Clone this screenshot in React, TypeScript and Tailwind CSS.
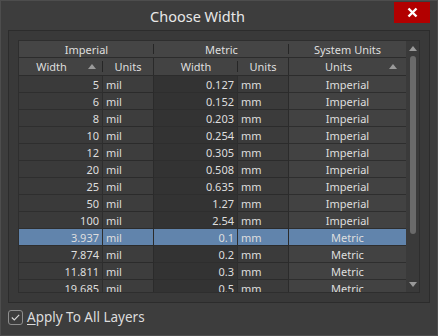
import React from "react";

const rows = [
  ["5", "0.127", "Imperial"],
  ["6", "0.152", "Imperial"],
  ["8", "0.203", "Imperial"],
  ["10", "0.254", "Imperial"],
  ["12", "0.305", "Imperial"],
  ["20", "0.508", "Imperial"],
  ["25", "0.635", "Imperial"],
  ["50", "1.27", "Imperial"],
  ["100", "2.54", "Imperial"],
  ["3.937", "0.1", "Metric"],
  ["7.874", "0.2", "Metric"],
  ["11.811", "0.3", "Metric"],
  ["19.685", "0.5", "Metric"],
];

const cols = "grid grid-cols-[84px_51px_84px_51px_117px]";

function UpTri({ className }: { className?: string }) {
  return (
    <svg width="8" height="5" viewBox="0 0 8 5" className={className}>
      <path d="M0 5 L4 0 L8 5 Z" fill="#9a9a9a" />
    </svg>
  );
}

export default function App() {
  return (
    <div
      className="w-[438px] h-[336px] bg-[#3d3d3d] border border-[#4d4d4d] flex flex-col text-[#dedede] overflow-hidden"
      style={{ fontFamily: '"Noto Sans", "Open Sans", sans-serif' }}
    >
      {/* Title bar */}
      <div className="h-[29px] flex items-start shrink-0">
        <div className="flex-1 text-center text-[14.5px] leading-[30px] text-[#e8e8e8]">Choose Width</div>
        <div className="mt-[1px] mr-[7px] w-[36px] h-[21px] bg-[#b20000] flex items-center justify-center">
          <svg width="11" height="11" viewBox="0 0 11 11">
            <path d="M1.5 1.5 L9.5 9.5 M9.5 1.5 L1.5 9.5" stroke="#fff" strokeWidth="2.4" />
          </svg>
        </div>
      </div>

      {/* Panel */}
      <div className="mx-[7px] h-[273px] border border-[#2c2c2c] bg-[#393939] p-[9px] shrink-0">
        <div className="h-[253px] border border-[#2e2e2e] flex bg-[#3b3b3b]">
          {/* table */}
          <div className="w-[387px] flex flex-col text-[11px]">
            {/* header 1 */}
            <div className="grid grid-cols-[135px_135px_117px] h-[17px] bg-[#454545] border-b border-[#2c2c2c]">
              <div className="flex items-center justify-center relative leading-none">
                Imperial
                <span className="absolute right-0 top-[3px] h-[10px] w-px bg-[#262626]" />
              </div>
              <div className="flex items-center justify-center relative leading-none">
                Metric
                <span className="absolute right-0 top-[3px] h-[10px] w-px bg-[#262626]" />
              </div>
              <div className="flex items-center justify-center leading-none">System Units</div>
            </div>
            {/* header 2 */}
            <div className={`${cols} h-[18px] bg-[#434343] border-b border-[#2c2c2c]`}>
              <div className="flex items-center relative leading-none">
                <span className="w-[65px] text-center">Width</span>
                <UpTri className="ml-[4px]" />
                <span className="absolute right-0 top-[3px] h-[11px] w-px bg-[#262626]" />
              </div>
              <div className="flex items-center justify-center leading-none border-r border-[#2a2a2a]">Units</div>
              <div className="flex items-center justify-center relative leading-none">
                Width
                <span className="absolute right-0 top-[3px] h-[11px] w-px bg-[#262626]" />
              </div>
              <div className="flex items-center justify-center leading-none border-r border-[#2a2a2a]">Units</div>
              <div className="flex items-center leading-none">
                <span className="w-[99px] text-center">Units</span>
                <UpTri className="ml-[1px]" />
              </div>
            </div>
            {/* data */}
            <div className="flex-1 overflow-hidden">
              {rows.map((r, i) => {
                const sel = i === 9;
                return (
                  <div key={i} className={`${cols} h-[17px] leading-none`}>
                    <div
                      className={`flex items-center justify-end pr-[3px] border-b border-r border-[#2e2e2e] ${sel ? "bg-[#6184ac]" : "bg-[#3a3a3a]"}`}
                    >
                      {r[0]}
                    </div>
                    <div
                      className={`flex items-center pl-[3px] border-b border-r border-[#2b2b2b] ${sel ? "bg-[#6184ac]" : "bg-[#3d3d3d]"}`}
                    >
                      mil
                    </div>
                    <div
                      className={`flex items-center justify-end pr-[3px] border-b border-r border-[#2e2e2e] ${sel ? "bg-[#6184ac]" : "bg-[#333333]"}`}
                    >
                      {r[1]}
                    </div>
                    <div
                      className={`flex items-center pl-[3px] border-b border-r border-[#2b2b2b] ${sel ? "bg-[#6184ac]" : "bg-[#3b3b3b]"}`}
                    >
                      mm
                    </div>
                    <div
                      className={`flex items-center justify-center border-b border-[#2e2e2e] ${sel ? "bg-[#6184ac]" : "bg-[#424242]"}`}
                    >
                      {r[2]}
                    </div>
                  </div>
                );
              })}
            </div>
          </div>
          {/* scrollbar */}
          <div className="w-[15px] flex flex-col items-center bg-[#3a3a3a]">
            <UpTri className="mt-[5px]" />
            <div className="mt-[5px] w-[6px] h-[178px] rounded-[3px] bg-[#6a6a6a]" />
            <div className="flex-1" />
            <svg width="8" height="5" viewBox="0 0 8 5" className="mb-[5px]">
              <path d="M0 0 L8 0 L4 5 Z" fill="#9a9a9a" />
            </svg>
          </div>
        </div>
      </div>

      {/* footer */}
      <div className="flex items-center mt-[7px] ml-[7px] gap-[4px]">
        <div className="w-[15px] h-[15px] rounded-[3px] border border-[#8e8e8e] flex items-center justify-center">
          <svg width="9" height="7" viewBox="0 0 9 7">
            <path d="M0.8 3.5 L3.3 6 L8.2 0.8" stroke="#d8d8d8" strokeWidth="1.1" fill="none" />
          </svg>
        </div>
        <span className="text-[13.5px] leading-none text-[#dcdcdc]">
          <span className="underline underline-offset-2">A</span>pply To All Layers
        </span>
      </div>
    </div>
  );
}
